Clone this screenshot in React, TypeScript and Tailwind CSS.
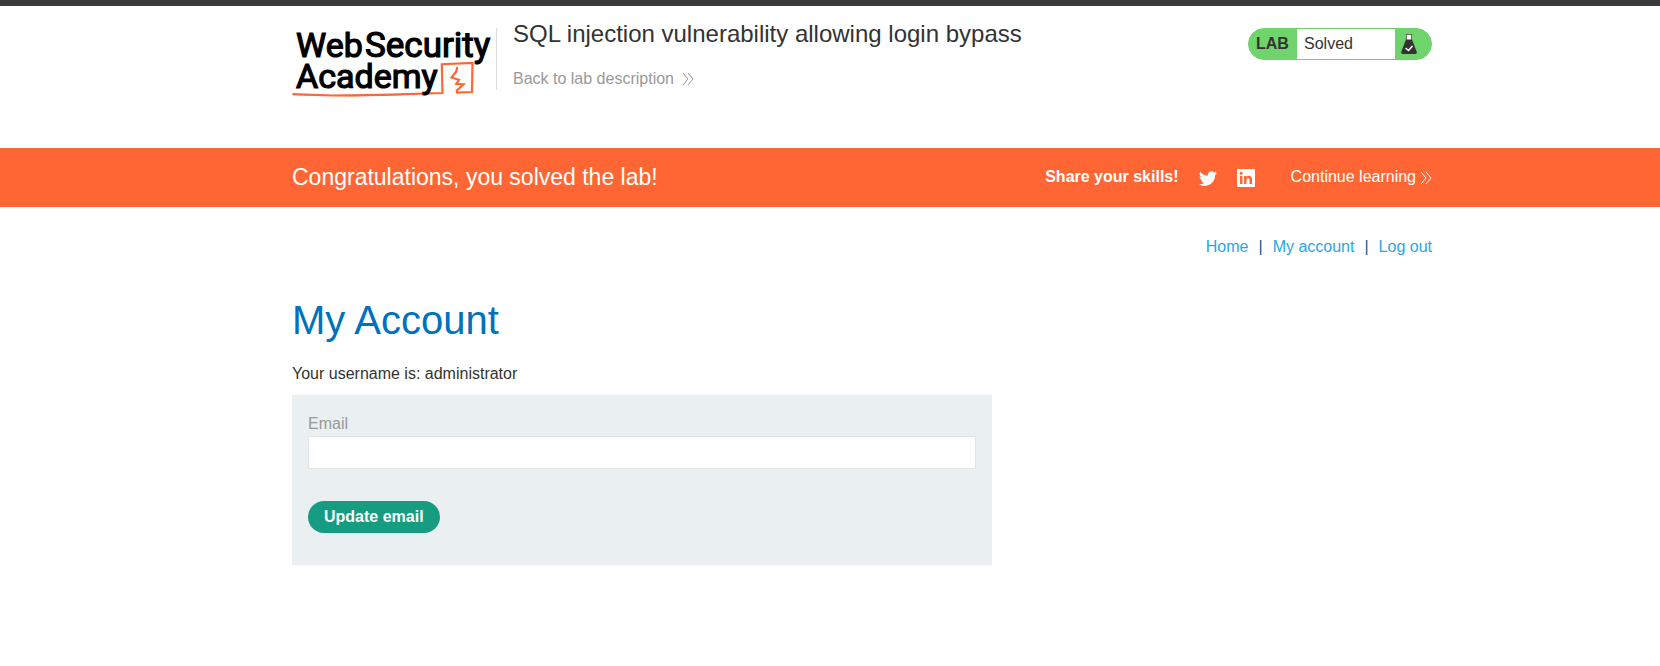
import { BsTwitter } from "react-icons/bs";
import type { ReactNode } from "react";

function Chevrons({ className }: { className?: string }) {
  return (
    <svg viewBox="0 0 12 14" width="12" height="14" fill="none" stroke="currentColor" className={className} aria-hidden="true">
      <path d="M1 1l5 6-5 6M6 1l5 6-5 6" />
    </svg>
  );
}

function Logo() {
  return (
    <svg viewBox="0 0 204 72" width="204" height="72" role="img" aria-label="Web Security Academy" className="shrink-0 overflow-visible">
      <g fill="none" stroke="#ff6633" strokeWidth="2.200">
        <path d="M0.500 66.200L40 67.500L90 66.800L150.500 65L149.800 36.200L180.500 35L180 64L164 64.600" />
        <path d="M2 66.500L60 68L120 66.300" strokeWidth="1" />
        <path d="M165.200 39L164.300 43.500L159.500 49.500L167 51.800L164.300 55.800L171.500 56.300L164.800 62.500V64.500" />
      </g>
      <g fill="#000" stroke="#000" strokeWidth="1.200" fontFamily="Roboto, sans-serif">
        <text x="4" y="29" fontSize="34">Web</text>
        <text x="73" y="29" fontSize="35">Security</text>
        <text x="4" y="60" fontSize="34">Academy</text>
      </g>
    </svg>
  );
}

function Flask() {
  return (
    <svg viewBox="0 0 16 20" width="16" height="20" aria-hidden="true">
      <path d="M5.500 1h5v5h-5z" fill="#fff" />
      <path d="M4.500 0.500h7M5.500 1v5M10.500 1v5" fill="none" stroke="#6b6b6a" />
      <path d="M5 5.500h6L15.800 18q0.200 2-1.300 2h-13Q0 20 0.200 18z" fill="#333332" />
      <path d="M4.500 14l3 2.500 4-4.500" fill="none" stroke="#fff" strokeWidth="1.500" />
    </svg>
  );
}

function LinkedIn() {
  return (
    <svg viewBox="0 0 18 18" width="18" height="18" aria-hidden="true">
      <path fill="#fff" fillRule="evenodd" d="M1 0h16a1 1 0 0 1 1 1v16a1 1 0 0 1-1 1H1a1 1 0 0 1-1-1V1a1 1 0 0 1 1-1zM3 7v8h2.500V7zM4.200 2.800a1.500 1.500 0 1 0 0 3 1.500 1.500 0 0 0 0-3zM7 7v8h2.500v-4c0-2.500 3-2.500 3 0v4H15v-5c0-3.500-4-4-5.500-2V7z" />
    </svg>
  );
}

function Container({ children }: { children: ReactNode }) {
  return (
    <div className="pl-16">
      <div className="mx-auto max-w-[1140px]">{children}</div>
    </div>
  );
}

export default function App() {
  return (
    <div className="min-h-screen border-t-6 border-[#3b3b3b] bg-white font-['Liberation_Sans',Arial,sans-serif] text-base text-[#333332]">
      <header className="pb-12">
        <Container>
          <div className="flex items-start pt-[22px]">
            <Logo />
            <div className="h-[62px] border-l border-[#dcdcdc] pl-4">
              <h2 className="-mt-2 text-2xl leading-7">SQL injection vulnerability allowing login bypass</h2>
              <a href="#description" className="mt-[21px] flex items-center gap-2 leading-5 text-[#999]">
                Back to lab description
                <Chevrons />
              </a>
            </div>
            <div className="ml-auto flex h-8 w-46 items-stretch overflow-hidden rounded-full border border-[#70d46c] bg-[#70d46c]">
              <strong className="flex w-12 items-center pl-[7px]">LAB</strong>
              <span className="flex w-[98px] items-center bg-white pl-[7px]">Solved</span>
              <span className="flex items-center pl-1.5">
                <Flask />
              </span>
            </div>
          </div>
        </Container>
      </header>

      <section className="bg-[#ff6633] text-white">
        <Container>
          <div className="flex h-[59px] items-center">
            <h3 className="pb-px text-[23px]">Congratulations, you solved the lab!</h3>
            <strong className="ml-auto pb-0.5">Share your skills!</strong>
            <a href="#twitter" aria-label="Share on Twitter" className="ml-5">
              <BsTwitter size={18} />
            </a>
            <a href="#linkedin" aria-label="Share on LinkedIn" className="ml-5">
              <LinkedIn />
            </a>
            <a href="#continue" className="ml-9 flex items-center gap-1">
              <span className="pb-0.5">Continue learning</span>
              <Chevrons />
            </a>
          </div>
        </Container>
      </section>

      <main>
        <Container>
          <nav className="flex justify-end gap-2.5 pt-7 text-[#0f5c96]">
            <a href="#home" className="text-[#29a6e6]">Home</a>
            <span>|</span>
            <a href="#account" className="text-[#29a6e6]">My account</a>
            <span>|</span>
            <a href="#logout" className="text-[#29a6e6]">Log out</a>
          </nav>
          <h1 className="mt-[37px] text-[40px] leading-12 text-[#0071bc]">My Account</h1>
          <p className="mt-[18px]">Your username is: administrator</p>
          <form className="mt-[9px] max-w-[700px] bg-[#eaeff2] px-4 pt-[17px] pb-8" onSubmit={(e) => e.preventDefault()}>
            <label htmlFor="email" className="block text-[#999]">Email</label>
            <input id="email" type="email" className="block h-[33px] w-full border border-[#e4e4e4] bg-white px-2 outline-none" />
            <button type="submit" className="mt-8 block h-8 rounded-full bg-[#169c80] px-4 font-bold text-white">
              Update email
            </button>
          </form>
        </Container>
      </main>
    </div>
  );
}
